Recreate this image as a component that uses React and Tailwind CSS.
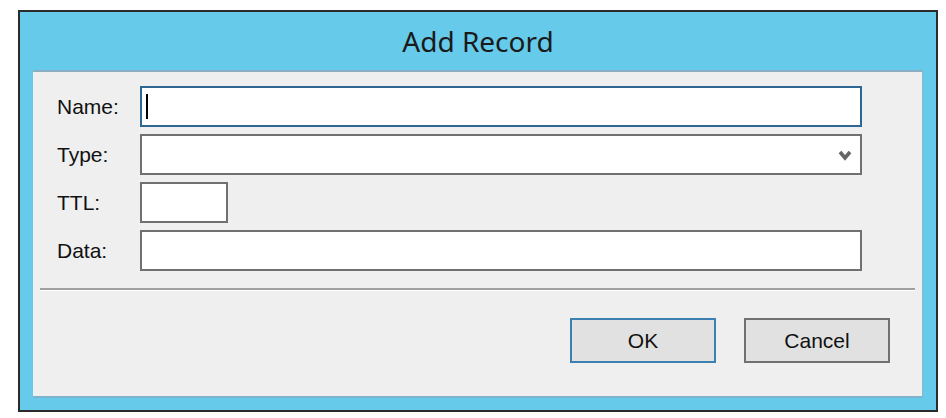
import React from 'react';

const fields = [
  { label: 'Name:', kind: 'name' },
  { label: 'Type:', kind: 'select' },
  { label: 'TTL:', kind: 'ttl' },
  { label: 'Data:', kind: 'text' },
];

function Field({ kind }) {
  if (kind === 'name') {
    return (
      <div className="flex h-[41px] w-[722px] items-center border-2 border-[#2e6791] bg-white pl-[4px]">
        <div className="h-[25px] w-[2px] bg-black" />
      </div>
    );
  }
  if (kind === 'select') {
    return (
      <div className="flex h-[41px] w-[722px] items-center justify-end border-2 border-[#707070] bg-white pr-[8px]">
        <svg width="14" height="12" viewBox="0 0 14 12">
          <polyline points="2,3 7,9 12,3" fill="none" stroke="#666666" strokeWidth="3.6" />
        </svg>
      </div>
    );
  }
  if (kind === 'ttl') {
    return <div className="h-[41px] w-[88px] border-2 border-[#707070] bg-white" />;
  }
  return <div className="h-[41px] w-[722px] border-2 border-[#707070] bg-white" />;
}

export default function App() {
  return (
    <div className="h-[418px] w-[946px] bg-white pl-[18px] pt-[10px]">
      <div className="flex h-[402px] w-[920px] flex-col border-2 border-[#2b2b2b] bg-[#66caea]">
        {/* title bar */}
        <div className="flex h-[58px] items-center justify-center">
          <span className="text-[28px] leading-none text-[#1a1a1a]" style={{ fontFamily: '"Noto Sans", sans-serif' }}>
            Add Record
          </span>
        </div>

        {/* body */}
        <div
          className="mx-[13px] flex h-[328px] flex-col border-t-2 border-b-2 border-r border-t-[#8aaec4] border-b-[#7fb2cd] border-r-[#8ab6cc] bg-[#efefef]"
          style={{ fontFamily: '"Liberation Sans", Arial, sans-serif' }}
        >
          <div className="flex flex-col gap-[7px] pt-[14px]">
            {fields.map((f) => (
              <div key={f.label} className="flex items-center">
                <span className="w-[107px] pl-[24px] text-[21px] text-[#111]">{f.label}</span>
                <Field kind={f.kind} />
              </div>
            ))}
          </div>

          <div className="mx-[7px] mt-[17px] h-[3px] border-t-2 border-[#a0a0a0] bg-white" />

          <div className="mt-[27px] flex justify-end gap-[28px] pr-[32px]">
            <button className="h-[45px] w-[146px] border-2 border-[#3c7fb1] bg-[#e1e1e1] text-[21px] text-[#111]">
              OK
            </button>
            <button className="h-[45px] w-[146px] border-2 border-[#707070] bg-[#e1e1e1] text-[21px] text-[#111]">
              Cancel
            </button>
          </div>
        </div>
      </div>
    </div>
  );
}
